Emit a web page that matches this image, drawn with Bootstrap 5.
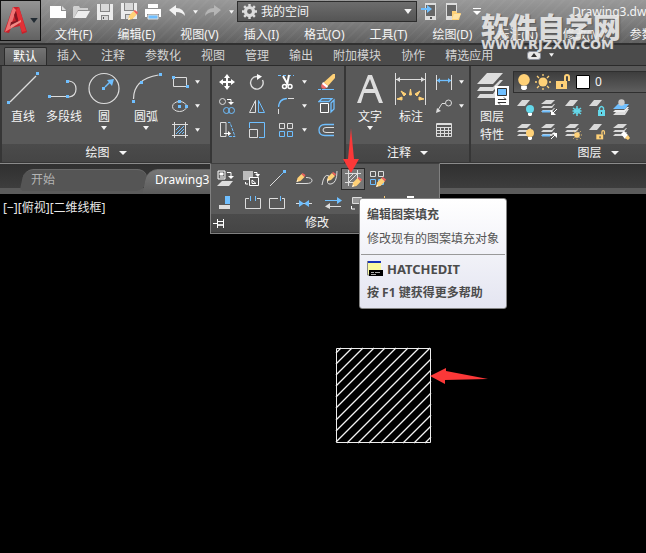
<!DOCTYPE html>
<html lang="zh-CN">
<head>
<meta charset="utf-8">
<meta name="viewport" content="width=device-width, initial-scale=1">
<title>Drawing3.dwg</title>
<link href="https://cdn.jsdelivr.net/npm/bootstrap@5.3.0/dist/css/bootstrap.min.css" rel="stylesheet">
<style>
body{font:12px/18px "Noto Sans","Noto Sans CJK SC",sans-serif;color:#f4f4f4;background:#000}
button,select{font:inherit;color:inherit;background:none;border:0;padding:0}
button{display:flex;align-items:center;justify-content:center;flex:none}
svg{display:block;flex:none;fill:none;stroke-width:1}
a{color:inherit;text-decoration:none;white-space:nowrap}
select{appearance:none}
.titlebar{height:45px;background:linear-gradient(#999,#858585 40%,#606060);border-bottom:2px solid #303030}
.stripes{min-width:0;background:repeating-linear-gradient(135deg,transparent 0 5px,#ffffff08 5px 7px)}
.appbtn{width:41px;height:41px;border:1px solid #111;background:linear-gradient(#949494,#626262);gap:3px}
.quick{height:23px}
.quick button{width:24px;height:22px}
.quick button.narrow{width:12px}
.doc-title{width:74px}
.space-box{height:21px;width:180px;background:linear-gradient(#6d6d6d,#555);border:1px solid #2c2c2c}
.menus{gap:25px;padding-left:14px;height:20px;line-height:23px}
.watermark{left:481px;top:13px;color:#e8e8e8;opacity:.9;pointer-events:none;z-index:2;text-shadow:1px 1px 1px #555}
.watermark b{font-size:28px;line-height:28px;font-weight:900}
.watermark span{font:bold 13px/8px "DejaVu Sans",sans-serif}
.tabsbar{height:21px;background:#4b4b4b;border-bottom:1px solid #2b2b2b;padding-left:4px;line-height:22px}
.tabsbar a{padding:0 10px;color:#d4d4d4}
.tabsbar a.current{padding:0 9px 0 8px;margin:2px 0 0;height:18px;line-height:18px;color:#fff;background:linear-gradient(#747474,#5c5c5c);border:1px solid #2b2b2b;border-bottom:0;border-radius:2px 2px 0 0}
.upbtn{width:14px;height:9px;background:#e8e8e8;border:1px solid #8a8f9a;border-radius:3px}
.ribbon{background:#595959;height:98px;border-bottom:1px solid #8b8b8b}
.panel{border-right:2px solid #363636;display:flex;flex-direction:column;flex:none}
.panel-body{height:78px;display:flex}
.panel-name{height:19px;background:linear-gradient(#4b4b4b,#454545);gap:9px;border-bottom:1px solid #363636;width:100%}
.draw-panel{width:212px;border-left:2px solid #363636}
.modify-panel{width:134px}
.note-panel{width:125px}
.layer-panel{width:256px}
.big{flex-direction:column;justify-content:flex-start;padding-top:5px;width:40px;white-space:nowrap}
.big svg:first-child{margin-bottom:1px}
.w42{width:42px}.w44{width:44px}
.smalls{display:grid;grid-auto-rows:24px;padding-top:4px;align-content:start}
.smalls.pair{grid-template-columns:24px 10px}
.smalls.mod{grid-template-columns:30px 30px 28px 8px 36px}
.smalls.lay{grid-template-columns:repeat(5,24px);padding-top:2px}
.layer-box{height:22px;margin-top:5px;background:linear-gradient(#3d3d3d,#5e5e5e);border:1px solid #2f2f2f;gap:5px;padding-left:4px}
.filetabs{height:30px;background:linear-gradient(#303030,#3d3d3d);border-bottom:6px solid #5b5b5b;padding:5px 0 0 22px}
.filetabs a{position:relative;z-index:0;height:22px;line-height:22px;padding-left:9px;width:123px;color:#b4b4b4}
.filetabs a::before{content:"";position:absolute;z-index:-1;inset:0 -2px 0 0;background:#555;border-top:1px solid #696969;border-radius:9px 12px 9px 4px;transform:skewX(-12deg)}
.filetabs a.open{height:25px;color:#fff;padding-left:10px}
.filetabs a.open::before{background:linear-gradient(#777,#5b5b5b);border-radius:10px 12px 0 0}
.model{color:#e8e8e8;padding:5px 3px}
.square{left:335px;top:347px}
.arrows{left:0;top:0;pointer-events:none;z-index:6}
.flyout{left:210px;top:163px;width:230px;background:#595959;border:1px solid #808080;border-top-color:#404040;z-index:3}
.flyout .r1{height:27px;padding-top:2px}
.flyout .r2{height:23px}
.flyout .hot{height:22px;border:1px solid #292929;background:#777}
.c20{width:20px}.c24{width:24px}.c26{width:26px}.c28{width:28px}.c34{width:34px}
.tip{left:359px;top:198px;width:148px;height:111px;background:linear-gradient(#fff,#e4e5f1);border:1px solid #848484;border-radius:3px;color:#555;z-index:5;padding:7px 7px 0;white-space:nowrap}
.tip p{margin:0 0 6px}
.tip hr{margin:0 -6px 5px;border-color:#999;opacity:1}
.tip b{color:#4c4c4c}
.tip .cmd{font-size:13px}
</style>
<script src="https://cdn.jsdelivr.net/npm/bootstrap@5.3.0/dist/js/bootstrap.bundle.min.js"></script>
</head>
<body class="min-vh-100 d-flex flex-column overflow-hidden position-relative">
<svg width="0" height="0" class="position-absolute" aria-hidden="true"><defs>
<symbol id="caret" viewBox="0 0 6 4"><path d="M0 0h6L3 4z" fill="#f4f4f4"/></symbol>
<symbol id="pencil" viewBox="0 0 9 9"><path d="M0 9l1-4 4-4 3 3-4 4z" fill="#ffd177"/><path d="M5 1l1-1 3 2-1 2z" fill="#f0605c"/><path d="M0 9l1-2 1 1z" fill="#fff"/></symbol>
<symbol id="sheet" viewBox="0 0 13 6"><path d="M5 0h8L8 6H0z" fill="#d9d9d9"/></symbol>
<symbol id="stack" viewBox="0 0 14 14"><path d="M5 1h9l-4 4H0zM2 7h9l2-2h1l-3 4H0zM2 11h9l2-2h1l-3 4H0z" fill="#d9d9d9"/></symbol>
<symbol id="bulb" viewBox="0 0 8 11"><circle cx="4" cy="4" r="4" fill="currentColor"/><path d="M2 8h4v2l-1 1H3l-1-1z" fill="#fff"/></symbol>
<symbol id="sun" viewBox="0 0 16 16"><circle cx="8" cy="8" r="4.5" fill="#ffd177"/><path d="M8 0v2M8 14v2M0 8h2M14 8h2M2 2l2 2M12 12l2 2M14 2l-2 2M4 12l-2 2" stroke="#ffd177" stroke-width="1.3"/></symbol>
<symbol id="unlock" viewBox="0 0 15 16"><path d="M0 7h11v8H0z" fill="#ffd177"/><path d="M9 7V3q0-2 2-2t2 2v4" stroke="#ffd177" stroke-width="2"/><path d="M5 10h2v3H5z" fill="#555"/></symbol>
<symbol id="grid4" viewBox="0 0 16 16"><path d="M1.500 1.500h5v5h-5zM9.500 1.500h5v5h-5z" stroke="#ddd"/><path d="M1.500 9.500h5v5h-5zM9.500 9.500h5v5h-5z" stroke="#6fbfff"/></symbol>
</defs></svg>

<header class="titlebar d-flex position-relative">
<button class="appbtn" aria-label="应用程序菜单"><svg width="23" height="27" viewBox="0 0 23 27"><path d="M9 0h6l8 25-5 2-2-8-9 2-2 5-5-1z" fill="#c8202a"/><path d="M9 0l3 3-6 19-5 3z" fill="#ef7373"/><path d="M12 4l3 12-9 3 1-4 5-1-2-6z" fill="#811721"/><path d="M15 16l3 9 4-1-7-24-3 3z" fill="#e23137"/><path d="M7 18l10-5v2L6 22z" fill="#f38a86"/></svg><svg width="8" height="5" viewBox="0 0 6 4"><path d="M0 0h6L3 4z" fill="#222b33"/></svg></button>
<div class="flex-grow-1 stripes overflow-hidden">
<div class="quick d-flex align-items-center ps-1">
<button aria-label="新建"><svg width="17" height="14" viewBox="0 0 17 14"><path d="M1 1h11v5h5v7H1z" fill="#fff"/><path d="M13 1l4 4h-4z" fill="#ddd"/></svg></button>
<button aria-label="打开"><svg width="17" height="14" viewBox="0 0 17 14"><path d="M0 2l1-1h5l1 2h8v2H5L1 13H0z" fill="#d0d0d0"/><path d="M5 6h12l-4 7H1z" fill="#ededed"/></svg></button>
<button aria-label="保存"><svg width="16" height="16" viewBox="0 0 16 16"><path d="M0 0h16v16H0z" fill="#ececec"/><path d="M3 0h10v8H3zM4 11h8v5H4z" fill="#858585"/><path d="M4 0h8v7H4zM5 12h6v4H5z" fill="#d8d8d8"/><path d="M6 13h1v2H6z" fill="#555"/></svg></button>
<button aria-label="另存为"><svg width="17" height="17" viewBox="0 0 17 17"><path d="M0 0h16v16H0z" fill="#ececec"/><path d="M3 0h10v8H3zM4 11h8v5H4z" fill="#858585"/><path d="M4 0h8v7H4zM5 12h5v4H5z" fill="#d8d8d8"/><use href="#pencil" x="7" y="7" width="10" height="10"/></svg></button>
<button aria-label="打印"><svg width="16" height="16" viewBox="0 0 16 16"><path d="M3 0h10v4H3zM0 5h16v8h-2v-3H2v3H0z" fill="#fff"/><path d="M3 11h10v4H3z" fill="#6fbfff" stroke="#ddd"/></svg></button>
<button aria-label="撤销"><svg width="16" height="13" viewBox="0 0 16 13"><path d="M0 5l7-5v3q8 0 9 8-3-4-9-4v4z" fill="#f2f2f2"/></svg></button>
<button class="narrow" aria-label="撤销列表"><svg width="5" height="4"><use href="#caret"/></svg></button>
<button aria-label="重做"><svg width="16" height="13" viewBox="0 0 16 13"><path d="M16 5L9 0v3Q1 3 0 11q3-4 9-4v4z" fill="#b5b5b5"/></svg></button>
<button class="narrow" aria-label="重做列表"><svg width="5" height="4"><use href="#caret"/></svg></button>
<label class="space-box d-flex align-items-center px-1 flex-shrink-0"><svg width="15" height="15" viewBox="0 0 16 16"><circle cx="8" cy="8" r="4.300" stroke="#ddd" stroke-width="3.400"/><path d="M8 0v3M8 13v3M0 8h3M13 8h3M2.300 2.300l2 2M11.700 11.700l2 2M13.700 2.300l-2 2M4.300 11.700l-2 2" stroke="#ddd" stroke-width="2.600"/></svg><select class="flex-grow-1 ps-1" aria-label="工作空间"><option>我的空间</option></select><svg width="8" height="5"><use href="#caret"/></svg></label>
<button aria-label="从移动设备打开"><svg width="16" height="17" viewBox="0 0 16 17"><path d="M4 0h11v17H4z" fill="#ddd"/><path d="M5 2h9v11H5z" fill="#666"/><path d="M0 5h6V2l5 4-5 4V7H0z" fill="#6fbfff"/><path d="M9 14h2v2H9z" fill="#555"/></svg></button>
<button aria-label="保存到移动设备"><svg width="16" height="17" viewBox="0 0 16 17"><path d="M1 0h11v17H1z" fill="#ddd"/><path d="M2 2h9v11H2z" fill="#666"/><path d="M7 8h4l1 2h4l-2 7H7z" fill="#ffd177"/><path d="M9 11h7l-3 5H7z" fill="#ffe3a4"/></svg></button>
<button aria-label="自定义快速访问工具栏"><svg width="8" height="8" viewBox="0 0 8 8"><path d="M0 0h8v1H0zM0 3h8L4 7z" fill="#fff"/></svg></button>
<span class="doc-title text-nowrap ms-auto flex-shrink-0">Drawing3.dwg</span>
</div>
<nav class="menus d-flex"><a href="#">文件(F)</a><a href="#">编辑(E)</a><a href="#">视图(V)</a><a href="#">插入(I)</a><a href="#">格式(O)</a><a href="#">工具(T)</a><a href="#">绘图(D)</a><a href="#">标注(N)</a><a href="#">修改(M)</a><a href="#">参数(P)</a></nav>
</div>
<div class="watermark position-absolute d-flex flex-column text-nowrap"><b>软件自学网</b><span>WWW.RJZXW.COM</span></div>
</header>

<nav class="tabsbar d-flex"><a class="current" href="#">默认</a><a href="#">插入</a><a href="#">注释</a><a href="#">参数化</a><a href="#">视图</a><a href="#">管理</a><a href="#">输出</a><a href="#">附加模块</a><a href="#">协作</a><a href="#">精选应用</a><div class="d-flex align-items-center gap-2 ps-4"><button class="upbtn" aria-label="最小化面板"><svg width="6" height="4" viewBox="0 0 6 4"><path d="M0 4h6L3 0z" fill="#333"/></svg></button><button aria-label="面板选项"><svg width="5" height="4"><use href="#caret"/></svg></button></div></nav>

<main class="flex-grow-1 d-flex flex-column">
<section class="ribbon d-flex overflow-hidden">
<div class="panel draw-panel">
<div class="panel-body">
<button class="big w42"><svg width="34" height="36" viewBox="0 0 34 36"><path d="M4 31L30 5" stroke="#ddd" stroke-width="1.200"/><path d="M1 30h3v3H1zM30 1h3v3h-3z" fill="#6fbfff"/></svg>直线</button>
<button class="big"><svg width="34" height="36" viewBox="0 0 34 36"><path d="M4 25.500h15M22 10q7 1 7 8t-7 8" stroke="#ddd" stroke-width="1.200"/><path d="M1 24h3v3H1zM19 24h3v3h-3zM19 9h3v3h-3z" fill="#6fbfff"/></svg>多段线</button>
<button class="big"><svg width="34" height="36" viewBox="0 0 34 36"><circle cx="17" cy="17.500" r="15" stroke="#ddd" stroke-width="1.200"/><path d="M18 16l5-5" stroke="#6fbfff" stroke-width="1.500"/><path d="M15 16h3v3h-3zM20 9l7-1-2 7z" fill="#6fbfff"/></svg>圆<svg width="6" height="4"><use href="#caret"/></svg></button>
<button class="big w44"><svg width="34" height="36" viewBox="0 0 34 36"><path d="M4.500 28q0-20 25-24" stroke="#ddd" stroke-width="1.200"/><path d="M3 29h3v3H3zM11 10h3v3h-3zM30 2h3v3h-3z" fill="#6fbfff"/></svg>圆弧<svg width="6" height="4"><use href="#caret"/></svg></button>
<div class="smalls pair">
<button aria-label="矩形"><svg width="17" height="14" viewBox="0 0 17 14"><path d="M1.500 2.500h13v9h-13z" stroke="#ddd"/><path d="M0 1h3v3H0zM14 10h3v3h-3z" fill="#6fbfff"/></svg></button><button aria-label="矩形选项"><svg width="5" height="4"><use href="#caret"/></svg></button>
<button aria-label="椭圆"><svg width="17" height="14" viewBox="0 0 17 14"><ellipse cx="7.500" cy="7.500" rx="7" ry="5" stroke="#ddd"/><path d="M6 1h3v3H6zM6 6h3v3H6zM13 6h3v3h-3z" fill="#6fbfff"/></svg></button><button aria-label="椭圆选项"><svg width="5" height="4"><use href="#caret"/></svg></button>
<button aria-label="图案填充"><svg width="16" height="16" viewBox="0 0 16 16"><path d="M0 2.500h16M0 13.500h16M2.500 0v16M13.500 0v16" stroke="#ddd"/><path d="M4 8l4-4M4 12l8-8M7 12l5-5M10 12l2-2" stroke="#6fbfff"/></svg></button><button aria-label="图案填充选项"><svg width="5" height="4"><use href="#caret"/></svg></button>
</div></div>
<button class="panel-name">绘图<svg width="8" height="4"><path d="M0 0h8L4 4z" fill="#f4f4f4"/></svg></button>
</div>

<div class="panel modify-panel"><div class="panel-body"><div class="smalls mod">
<button aria-label="移动"><svg width="16" height="16" viewBox="0 0 16 16"><path d="M8 2v12M2 8h12" stroke="#fff" stroke-width="2"/><path d="M8 0l3 4H5zM8 16l3-4H5zM0 8l4-3v6zM16 8l-4-3v6z" fill="#fff"/></svg></button>
<button aria-label="旋转"><svg width="16" height="16" viewBox="0 0 16 16"><path d="M11 2.500H8A6.300 6.300 0 1 0 13.500 6" stroke="#ddd" stroke-width="1.400"/><path d="M8 0l5 2.500L8 6z" fill="#fff"/></svg></button>
<button aria-label="修剪"><svg width="17" height="16" viewBox="0 0 17 16"><path d="M0 1.500h16" stroke="#6fbfff" stroke-dasharray="3 2"/><path d="M5 2l5 9M11 1l-2 10" stroke="#fff" stroke-width="2"/><circle cx="6.500" cy="12.500" r="2" stroke="#fff" stroke-width="1.500"/><circle cx="12" cy="12.500" r="2" stroke="#fff" stroke-width="1.500"/></svg></button><button aria-label="修剪选项"><svg width="5" height="4"><use href="#caret"/></svg></button>
<button aria-label="删除"><svg width="17" height="16" viewBox="0 0 17 16"><path d="M5 9l10-9h2v4L9 13z" fill="#ffd177"/><circle cx="6" cy="12" r="2.800" fill="#f0686a"/><path d="M5 8l5 4-1 2-5-4z" fill="#fff"/><path d="M0 15.500h16" stroke="#6fbfff" stroke-dasharray="3 1 12"/></svg></button>
<button aria-label="复制"><svg width="17" height="16" viewBox="0 0 17 16"><circle cx="3.500" cy="3.500" r="3" stroke="#ddd"/><circle cx="7.500" cy="12.500" r="3" stroke="#6fbfff"/><circle cx="12.500" cy="12.500" r="3" stroke="#6fbfff"/><path d="M8 1.500h4v3" stroke="#fff"/><path d="M9 4h6l-3 3z" fill="#fff"/></svg></button>
<button aria-label="镜像"><svg width="16" height="15" viewBox="0 0 16 15"><path d="M6.500 1.500v12h-6z" stroke="#ddd"/><path d="M9.500 1.500v12h6z" stroke="#6fbfff"/></svg></button>
<button aria-label="圆角"><svg width="17" height="16" viewBox="0 0 17 16"><path d="M.500 9Q1 1 9 .500" stroke="#6fbfff" stroke-width="1.400"/><path d="M10 .500h6M.500 11v5" stroke="#ddd"/></svg></button><button aria-label="圆角选项"><svg width="5" height="4"><use href="#caret"/></svg></button>
<button aria-label="分解"><svg width="17" height="16" viewBox="0 0 17 16"><path d="M2.500 5.500h8v9h-8z" stroke="#fff"/><path d="M1 3.500L4 .500h10l-3 3zM13 5l3-3v9l-3 3z" stroke="#6fbfff" stroke-width="1.300"/></svg></button>
<button aria-label="拉伸"><svg width="17" height="16" viewBox="0 0 17 16"><path d="M7 .500H1.500v14H7V.500" stroke="#ddd"/><path d="M9 .500h2l5 14H9" stroke="#6fbfff" stroke-dasharray="3 1"/><path d="M5 11.500h5" stroke="#fff"/><path d="M9 9l3 2.500L9 14z" fill="#fff"/></svg></button>
<button aria-label="缩放"><svg width="16" height="16" viewBox="0 0 16 16"><path d="M.500 6V.500h15v15H10" stroke="#6fbfff"/><path d="M.500 7.500h8v8h-8z" stroke="#ddd"/></svg></button>
<button aria-label="阵列"><svg width="16" height="16"><use href="#grid4"/></svg></button><button aria-label="阵列选项"><svg width="5" height="4"><use href="#caret"/></svg></button>
<button aria-label="偏移"><svg width="16" height="14" viewBox="0 0 16 14"><path d="M16 1.500H7q-6 0-6 5.500t6 5.500h9" stroke="#6fbfff" stroke-width="1.300"/><path d="M16 4.500H8q-3 0-3 2.500t3 2.500h8" stroke="#ddd"/></svg></button>
</div></div></div>

<div class="panel note-panel"><div class="panel-body">
<button class="big w44 ps-1"><svg width="30" height="36" viewBox="0 0 30 36"><path d="M2 32L13 4h4l11 28h-4l-4-10H9L6 32zM10.500 18h8L15 8z" fill="#ddd" fill-rule="evenodd"/></svg>文字<svg width="6" height="4"><use href="#caret"/></svg></button>
<button class="big w42"><svg width="34" height="36" viewBox="0 0 34 36"><path d="M1.500 2v32M31.500 2v32M2 8.500h29" stroke="#ddd"/><path d="M2 8.500L6 6v5zM31 8.500L27 6v5z" fill="#ddd"/><path d="M15.500 24l1-6 1 6zM10 25l-3-5 5 3zM23 25l3-5-5 3zM8 29l-5-1 5-2zM25 29l5-1-5-2z" fill="#ffd177" stroke="#ffd177"/></svg>标注</button>
<div class="smalls pair">
<button aria-label="线性标注"><svg width="16" height="15" viewBox="0 0 16 15"><path d="M.500 0v15M15.500 0v15" stroke="#ddd"/><path d="M1 5.500h14" stroke="#6fbfff" stroke-width="1.300"/><path d="M1 5.500L4 3v5zM15 5.500L12 3v5z" fill="#6fbfff"/></svg></button><button aria-label="标注选项"><svg width="5" height="4"><use href="#caret"/></svg></button>
<button aria-label="引线"><svg width="17" height="15" viewBox="0 0 17 15"><circle cx="12.500" cy="4" r="3" stroke="#ddd"/><path d="M9 4.500H6L2 11" stroke="#ddd"/><path d="M0 14l1-5 4 3z" fill="#ddd"/></svg></button><button aria-label="引线选项"><svg width="5" height="4"><use href="#caret"/></svg></button>
<button aria-label="表格"><svg width="16" height="14" viewBox="0 0 16 14"><path d="M.500.500h15v13H.500zM1 1.500h14M1 4.500h14M1 7.500h14M1 10.500h14M4.500 4v9M8.500 4v9M12.500 4v9" stroke="#ddd"/></svg></button>
</div></div>
<button class="panel-name">注释<svg width="8" height="4"><path d="M0 0h8L4 4z" fill="#f4f4f4"/></svg></button></div>

<div class="panel layer-panel"><div class="panel-body">
<button class="big w42"><svg width="34" height="36" viewBox="0 0 34 36"><path d="M12 2h16l-10 11H2zM5 16h13l7-7h3L18 20H2zM5 23h13l2-3v7H2z" fill="#ddd"/><path d="M20 15h14v19H20z" fill="#fff"/><path d="M22.500 17.500h9v7h-9z" fill="#6fbfff" stroke="#333"/><path d="M23 28.500h8l-2-2M31 31.500h-8l2 2" stroke="#333"/></svg>图层<br>特性</button>
<div class="flex-grow-1">
<div class="layer-box d-flex align-items-center"><svg width="12" height="16" style="color:#ffd177"><use href="#bulb"/></svg><svg width="16" height="16"><use href="#sun"/></svg><svg width="15" height="16"><use href="#unlock"/></svg><svg width="14" height="14" viewBox="0 0 14 14"><path d="M.500.500h13v13H.500z" fill="#fff" stroke="#000"/></svg><select class="flex-grow-1" aria-label="图层"><option>0</option></select></div>
<div class="smalls lay">
<button aria-label="关"><svg width="17" height="17" viewBox="0 0 17 17"><use href="#sheet" width="13" height="6" y="1"/><use href="#bulb" x="9" y="6" width="8" height="11" color="#64d8ea"/></svg></button>
<button aria-label="隔离"><svg width="17" height="17" viewBox="0 0 17 17"><use href="#stack" width="14" height="14"/><path d="M1 12.500h8" stroke="#6fbfff" stroke-width="2"/><path d="M16 10l-4 4" stroke="#fff"/><path d="M10 16v-5l5 5z" fill="#fff"/></svg></button>
<button aria-label="冻结"><svg width="17" height="17" viewBox="0 0 17 17"><use href="#sheet" width="13" height="6" y="1"/><path d="M12 7v10M8 9l8 6M16 9l-8 6M7.500 12h9" stroke="#64d8ea" stroke-width="1.500"/><circle cx="12" cy="12" r="2.500" stroke="#64d8ea"/></svg></button>
<button aria-label="锁定"><svg width="17" height="17" viewBox="0 0 17 17"><use href="#sheet" width="13" height="6" y="1"/><path d="M9 11h7v6H9z" fill="#64d8ea"/><path d="M10.500 11V9q2-3 4 0v2" stroke="#64d8ea" stroke-width="1.400"/><path d="M12 13h1v2h-1z" fill="#444"/></svg></button>
<button aria-label="置为当前"><svg width="17" height="17" viewBox="0 0 17 17"><path d="M3 13h9l2-3h2l-4 6H0z" fill="#ddd"/><path d="M2 11h9l3-3h2l-4 5H0z" fill="#eee"/><path d="M5 5h11l-4 5H0z" fill="#6fbfff"/><circle cx="8.500" cy="3.500" r="3.200" fill="#ccc"/></svg></button>
<button aria-label="全部打开"><svg width="17" height="17" viewBox="0 0 17 17"><use href="#stack" width="14" height="14"/><use href="#bulb" x="9" y="6" width="8" height="11" color="#ffd177"/></svg></button>
<button aria-label="取消隔离"><svg width="17" height="17" viewBox="0 0 17 17"><use href="#stack" width="14" height="14"/><path d="M1 12.500h8" stroke="#6fbfff" stroke-width="2"/><path d="M10 16l4-4" stroke="#fff"/><path d="M16 10v5l-5-5z" fill="#fff"/></svg></button>
<button aria-label="解冻"><svg width="17" height="17" viewBox="0 0 17 17"><use href="#stack" width="14" height="14"/><use href="#sun" x="7" y="7" width="10" height="10"/></svg></button>
<button aria-label="解锁"><svg width="17" height="17" viewBox="0 0 17 17"><use href="#sheet" width="13" height="6" y="1"/><use href="#unlock" x="7" y="7" width="10" height="10"/></svg></button>
<button aria-label="匹配图层"><svg width="17" height="17" viewBox="0 0 17 17"><use href="#stack" width="14" height="14"/><path d="M8 11l3-3 4 4-3 4z" fill="#fff"/><path d="M12 15l3-3 2 3-2 2z" fill="#ffd177"/></svg></button>
</div></div></div>
<button class="panel-name">图层<svg width="8" height="4"><path d="M0 0h8L4 4z" fill="#f4f4f4"/></svg></button></div>
</section>

<nav class="filetabs d-flex"><a href="#">开始</a><a class="open" href="#">Drawing3</a></nav>
<section class="model flex-grow-1">[&minus;][俯视][二维线框]</section>
</main>

<svg class="square position-absolute" width="97" height="97" viewBox="0 0 97 97"><path d="M1 17L17 1M1 28L28 1M1 39L39 1M1 50L50 1M1 61L61 1M1 73L73 1M1 84L84 1M1 95L95 1M12 96L96 12M23 96L96 23M34 96L96 34M46 96L96 46M57 96L96 57M68 96L96 68M79 96L96 79M90 96L96 90M1 6L6 1" stroke="#f4f4f4" stroke-width="1.300"/><path d="M1.500 1.500h94v94h-94z" stroke="#eee"/></svg>

<section class="flyout position-absolute">
<div class="r1 d-flex align-items-center">
<button class="c28" aria-label="设置为随层"><svg width="17" height="17" viewBox="0 0 17 17"><path d="M1 1h7v8H1z" fill="#666" stroke="#fff"/><path d="M3 3h3v2H3zM3 7h4" fill="#fff" stroke="#fff"/><path d="M5 11h11l-4 5H0z" fill="#ddd"/><path d="M10 2.500h4v4" stroke="#fff"/><path d="M11 6h6l-3 3z" fill="#fff"/></svg></button>
<button class="c24" aria-label="更改空间"><svg width="17" height="17" viewBox="0 0 17 17"><path d="M0 1h10v9H0z" fill="#bbb"/><path d="M6.500 7.500h9v8h-9z" fill="#555" stroke="#fff"/><path d="M9 13.500V10l4 3.500zM11 2.500h3v2M2.500 12v2H5" stroke="#fff"/><path d="M12 4h5l-2 3z" fill="#fff"/></svg></button>
<button class="c28" aria-label="拉长"><svg width="17" height="17" viewBox="0 0 17 17"><path d="M1 16L11 6" stroke="#ddd"/><path d="M11 6l4-4" stroke="#6fbfff"/><path d="M14 0h3v3h-3z" fill="#6fbfff"/></svg></button>
<button class="c26" aria-label="编辑多段线"><svg width="18" height="12" viewBox="0 0 18 12"><path d="M1 10.500h10q6 0 6-3t-6-3" stroke="#ddd"/><use href="#pencil" x="1" width="10" height="9"/></svg></button>
<button class="c24" aria-label="编辑样条曲线"><svg width="17" height="17" viewBox="0 0 17 17"><path d="M1 15Q3 3 8 6q-4 9 2 8t6-13" stroke="#ddd"/><use href="#pencil" x="6" y="2" width="9" height="9"/></svg></button>
<button class="c24 hot" aria-label="编辑图案填充"><svg width="17" height="17" viewBox="0 0 17 17"><path d="M0 3.500h16M0 12.500h9M3.500 0v16M12.500 0v9M4 8l5-5M4 12l9-9" stroke="#ddd"/><use href="#pencil" x="7" y="7" width="10" height="10"/></svg></button>
<button class="c24" aria-label="编辑阵列"><svg width="17" height="17" viewBox="0 0 17 17"><use href="#grid4" width="16" height="16"/><use href="#pencil" x="7" y="7" width="10" height="10"/></svg></button>
</div>
<div class="r2 d-flex align-items-center">
<button class="c28" aria-label="对齐"><svg width="12" height="14" viewBox="0 0 12 14"><path d="M6 0h5v8H6z" fill="#6fbfff"/><path d="M0 9h11v4H0z" fill="#ddd"/></svg></button>
<button class="c28" aria-label="打断"><svg width="17" height="14" viewBox="0 0 17 14"><path d="M4 2.500H.500v10h15v-10H12" stroke="#ddd"/><path d="M5.500 0v5M10.500 0v5" stroke="#6fbfff"/></svg></button>
<button class="c20" aria-label="打断于点"><svg width="17" height="14" viewBox="0 0 17 14"><path d="M9 2.500H.500v10h15v-10H13" stroke="#ddd"/><path d="M11.500 0v5" stroke="#6fbfff"/></svg></button>
<button class="c34" aria-label="合并"><svg width="17" height="8" viewBox="0 0 17 8"><path d="M0 4.500h16" stroke="#ddd"/><path d="M3 1l5 3.500L3 8zM13 1L8 4.500 13 8z" fill="#6fbfff"/></svg></button>
<button class="c24" aria-label="反转"><svg width="17" height="12" viewBox="0 0 17 12"><path d="M0 3.500h13" stroke="#6fbfff"/><path d="M12 0l5 3.500L12 7z" fill="#6fbfff"/><path d="M3 9.500h13" stroke="#ddd"/><path d="M5 6L0 9.500 5 12z" fill="#ddd"/></svg></button>
<button class="c26" aria-label="复制嵌套对象"><svg width="16" height="16" viewBox="0 0 16 16"><path d="M2.500 2.500h9v6h-9z" fill="#999" stroke="#ddd"/><path d="M1.500 11v3H5" stroke="#fff"/></svg></button>
<button class="c28" aria-label="前置"><svg width="12" height="16" viewBox="0 0 12 16"><path d="M5.500 1v14" stroke="#ffd177"/></svg></button>
<button class="c24" aria-label="删除重复对象"><svg width="12" height="16" viewBox="0 0 12 16"><path d="M2 1h7v2H4v8H2z" fill="#fff"/></svg></button>
</div>
<div class="panel-name d-flex align-items-center justify-content-center position-relative pe-3"><span>修改</span><button class="position-absolute start-0" aria-label="固定"><svg width="15" height="10" viewBox="0 0 15 10"><path d="M2 5.500h4M6.500 1v9M12.500 1v9M7 3.500h5M7 7.500h5" stroke="#fff"/><path d="M7 6h5v2H7z" fill="#ddd"/></svg></button></div>
</section>

<aside class="tip position-absolute" role="tooltip"><p><b>编辑图案填充</b></p><p>修改现有的图案填充对象</p><hr><p class="d-flex align-items-center gap-1"><svg width="16" height="16" viewBox="0 0 16 16"><path d="M0 0h14v14H0z" fill="#f8f8a0"/><path d="M0 0h14v2H0z" fill="#1730b8"/><path d="M.500 0v14H3" stroke="#888"/><path d="M2 9h14v6H2z" fill="#000"/><path d="M4 11.500h3M8 11.500h5M4 13.500h5" stroke="#aaa"/></svg><b class="cmd">HATCHEDIT</b></p><p><b>按 F1 键获得更多帮助</b></p></aside>
<svg class="arrows position-absolute" width="500" height="400" viewBox="0 0 500 400"><path d="M351 128l3 31h5l-8 14-8-14h5zM430 376l16-8v3l42 8-43 1v4z" fill="#fb3838"/></svg>
</body>
</html>
